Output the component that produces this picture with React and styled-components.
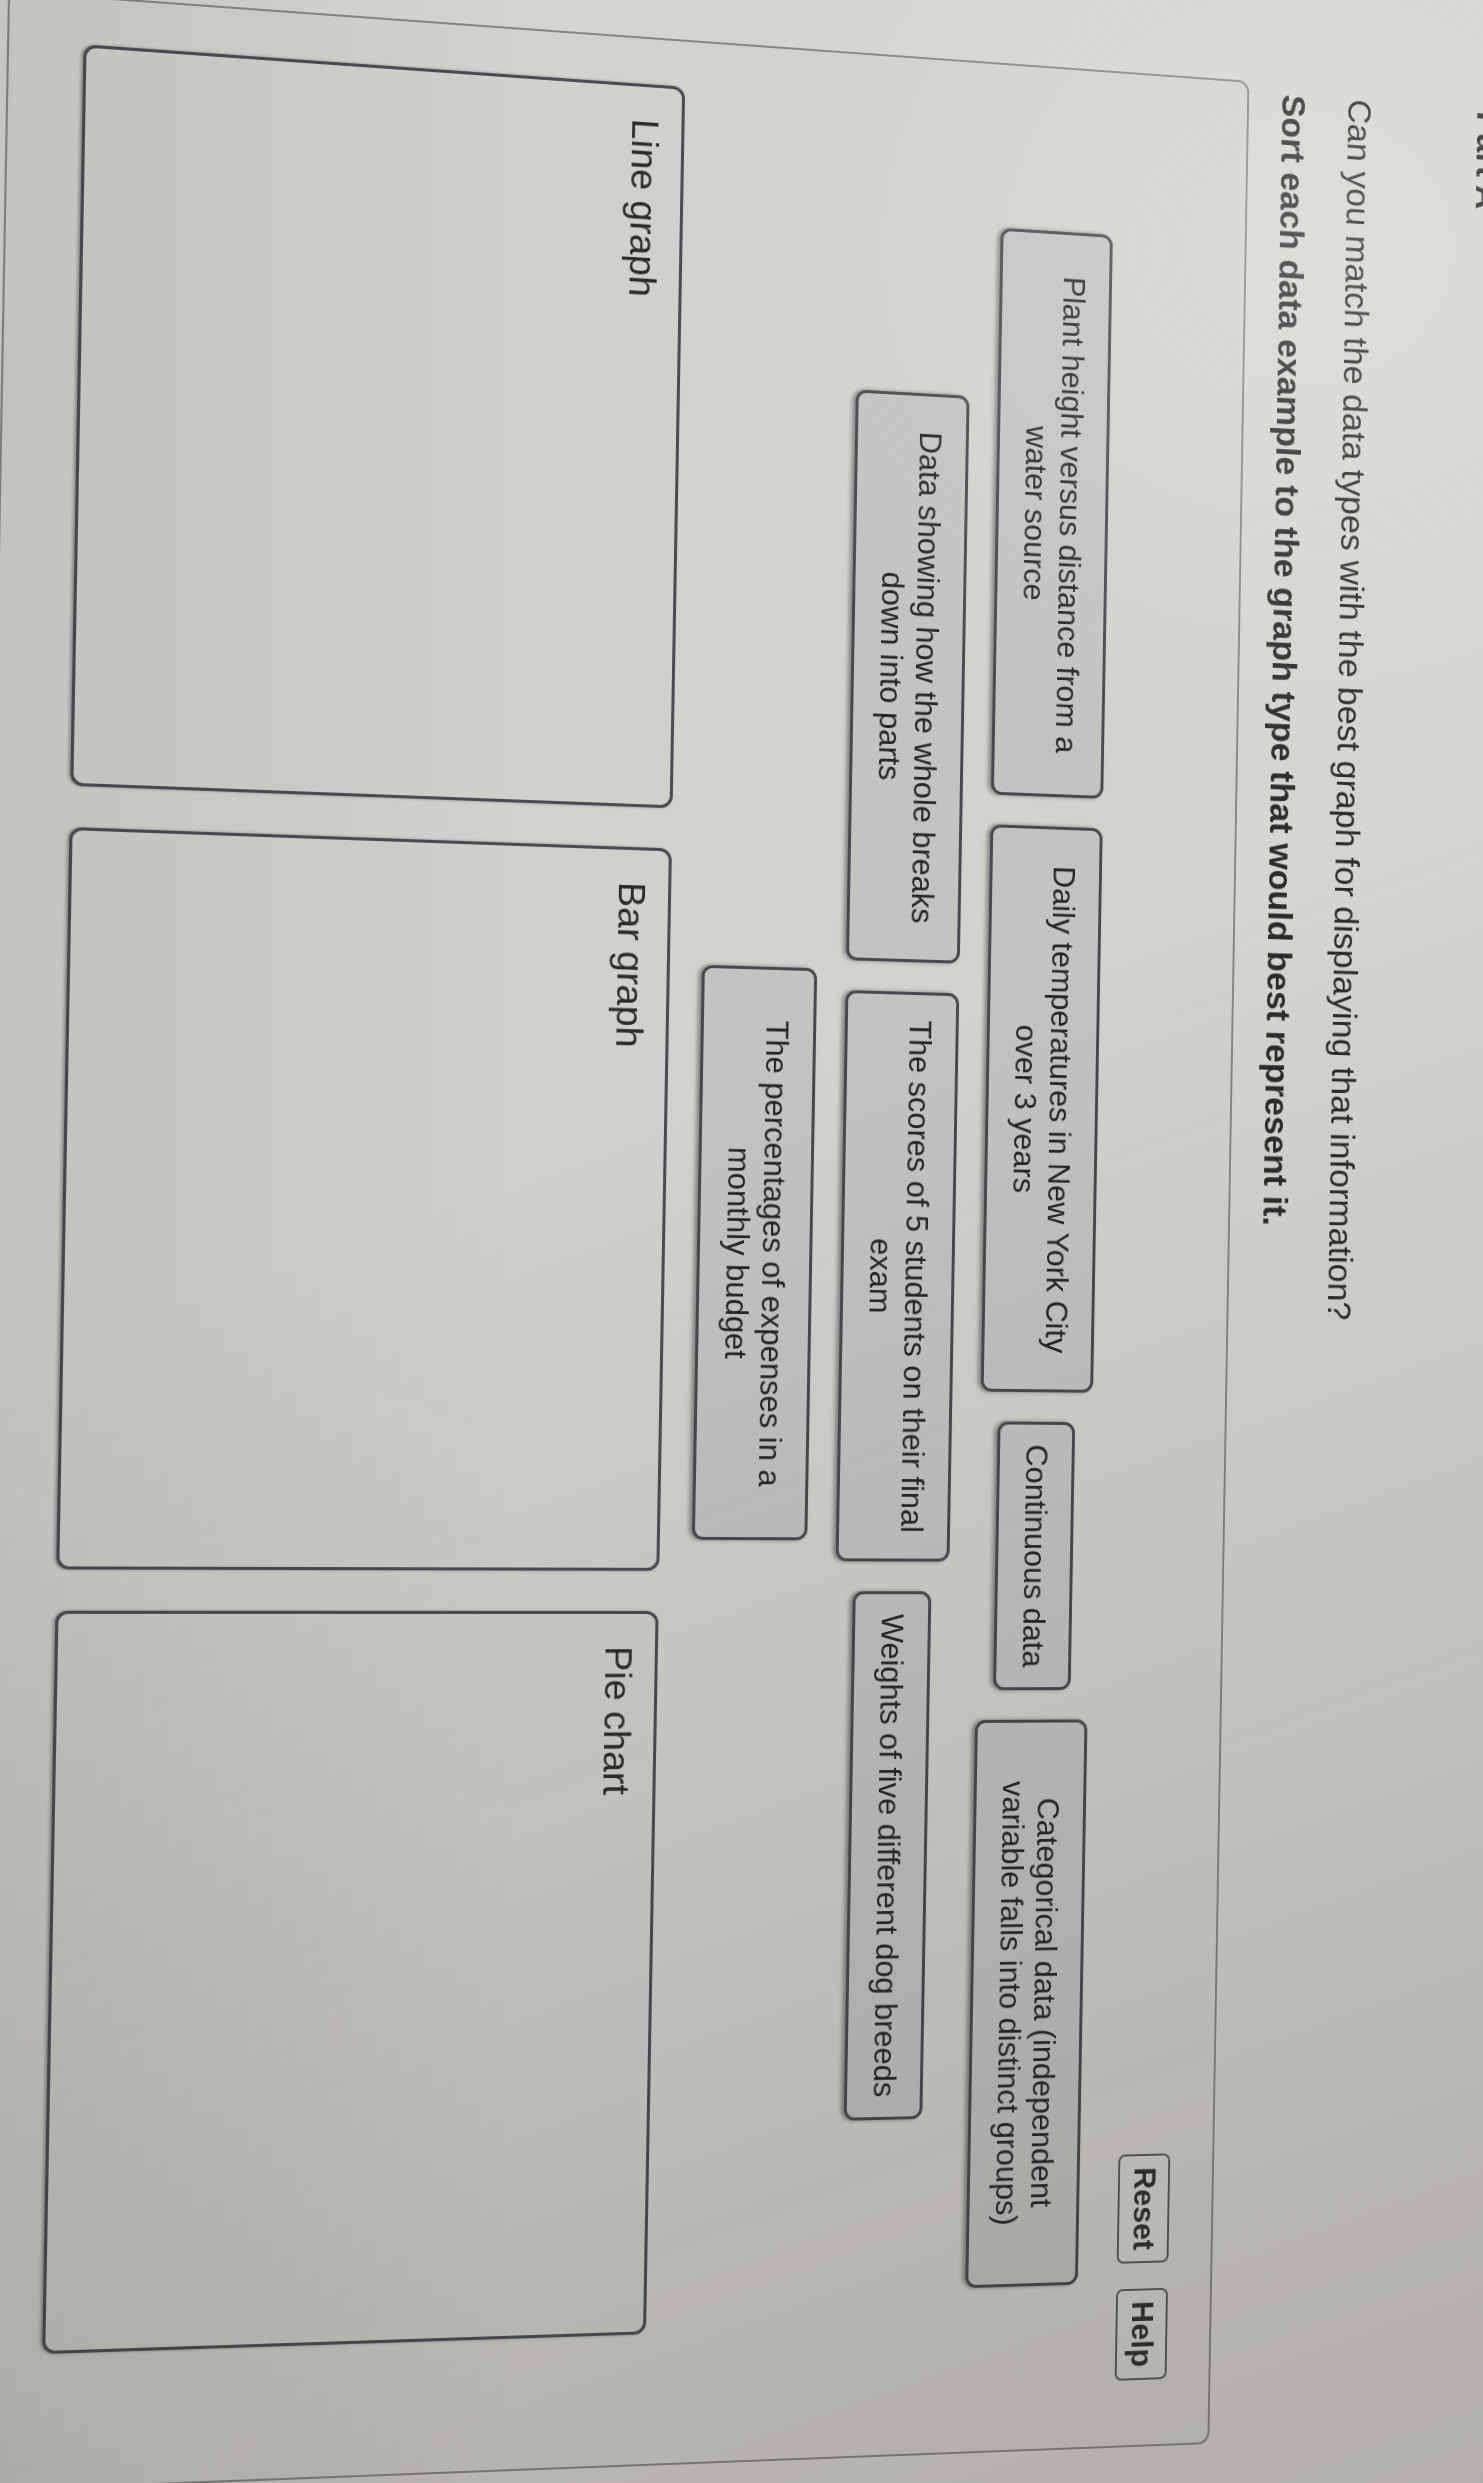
import React from "react";
import styled, { createGlobalStyle } from "styled-components";

const Global = createGlobalStyle`
  html, body { margin: 0; padding: 0; background: #d3d2cd; }
  body { font-family: "Liberation Sans", Arial, sans-serif; }
  * { box-sizing: border-box; }
`;

const Photo = styled.div`
  position: relative;
  width: 1483px;
  height: 2483px;
  overflow: hidden;
  background: #d2d1cc;
  &::after {
    content: "";
    position: absolute;
    inset: 0;
    pointer-events: none;
    background:
      radial-gradient(ellipse 55% 30% at 88% 10%, rgba(255, 255, 255, 0.22), rgba(255, 255, 255, 0) 75%),
      linear-gradient(160deg, rgba(0, 0, 0, 0) 45%, rgba(45, 38, 30, 0.22) 100%),
      linear-gradient(90deg, rgba(20, 20, 10, 0.08), rgba(0, 0, 0, 0) 35%);
  }
`;

const Tilt = styled.div`
  width: 1483px;
  height: 2483px;
  display: flex;
  align-items: center;
  justify-content: center;
  transform-origin: 50% 50%;
  transform: perspective(2000px) rotateY(5.28deg) rotate(1deg);
  filter: blur(0.6px);
`;

const Screen = styled.div`
  flex: 0 0 auto;
  width: 2603px;
  height: 1603px;
  transform: rotate(90deg);
  background: #d6d5d0;
  padding: 25px 81px 0 104px;
  display: flex;
  flex-direction: column;
  color: #2e2e2e;
`;

const Heading = styled.h2`
  margin: 0 0 0 14px;
  font-size: 35px;
  line-height: 40px;
  font-weight: 700;
  color: #2a2a2a;
`;

const Prompt = styled.p`
  margin: ${(p) => (p.$first ? "98px" : "30px")} 0 0 11px;
  font-size: 35px;
  line-height: 40px;
  font-weight: ${(p) => (p.$bold ? 700 : 400)};
  color: #2c2c2c;
`;

const Panel = styled.section`
  margin-top: 27px;
  border: 2px solid #878682;
  border-radius: 12px;
  background: #d3d2cd;
  padding: 44px 45px 70px;
  display: flex;
  flex-direction: column;
`;

const Toolbar = styled.div`
  display: flex;
  justify-content: flex-end;
  gap: 26px;
  padding-right: 21px;
`;

const ToolButton = styled.button`
  font-family: "Liberation Sans", Arial, sans-serif;
  font-weight: 700;
  font-size: 31px;
  line-height: 36px;
  padding: 7px 11px;
  border: 2px solid #58585a;
  border-radius: 7px;
  background: #d6d6d2;
  color: #2f2f2f;
`;

const Cards = styled.div`
  margin-top: 40px;
  display: flex;
  flex-wrap: wrap;
  justify-content: center;
  align-items: center;
  column-gap: 30px;
  row-gap: 29px;
`;

const Card = styled.div`
  max-width: 574px;
  padding: 19px 20px;
  border: 3px solid #48484e;
  border-radius: 11px;
  background: #c3c3c2;
  box-shadow: 0 3px 4px rgba(0, 0, 0, 0.38);
  font-size: 31px;
  line-height: 36px;
  text-align: center;
  color: #252525;
`;

const Zones = styled.div`
  margin-top: 32px;
  display: flex;
  gap: 40px;
`;

const Zone = styled.div`
  width: 720px;
  height: 585px;
  border: 3px solid #4b4b51;
  border-radius: 12px;
  background: #d1d0cb;
  padding: 14px 32px;
  box-shadow: 0 2px 3px rgba(0, 0, 0, 0.3);
`;

const ZoneLabel = styled.div`
  font-size: 37.5px;
  line-height: 45px;
  color: #2b2b2b;
`;

const cards = [
  "Plant height versus distance from a water source",
  "Daily temperatures in New York City over 3 years",
  "Continuous data",
  "Categorical data (independent variable falls into distinct groups)",
  "Data showing how the whole breaks down into parts",
  "The scores of 5 students on their final exam",
  "Weights of five different dog breeds",
  "The percentages of expenses in a monthly budget",
];

const zones = ["Line graph", "Bar graph", "Pie chart"];

export default function App() {
  return (
    <>
      <Global />
      <Photo>
        <Tilt>
          <Screen>
            <Heading>Part A</Heading>
            <Prompt $first>
              Can you match the data types with the best graph for displaying that information?
            </Prompt>
            <Prompt $bold>
              Sort each data example to the graph type that would best represent it.
            </Prompt>
            <Panel>
              <Toolbar>
                <ToolButton>Reset</ToolButton>
                <ToolButton>Help</ToolButton>
              </Toolbar>
              <Cards>
                {cards.map((c) => (
                  <Card key={c}>{c}</Card>
                ))}
              </Cards>
              <Zones>
                {zones.map((z) => (
                  <Zone key={z}>
                    <ZoneLabel>{z}</ZoneLabel>
                  </Zone>
                ))}
              </Zones>
            </Panel>
          </Screen>
        </Tilt>
      </Photo>
    </>
  );
}
